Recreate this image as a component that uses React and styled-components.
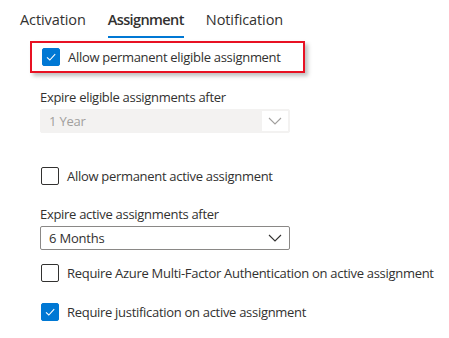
import React from "react";
import styled, { createGlobalStyle } from "styled-components";

const Global = createGlobalStyle`
  html, body { margin: 0; padding: 0; background: #fff; }
  body { font-family: "Open Sans", "Noto Sans", sans-serif; color: #323130; }
`;

const Page = styled.div`
  width: 449px;
  height: 338px;
  overflow: hidden;
  display: flex;
  flex-direction: column;
`;

const Tabs = styled.div`
  display: flex;
  padding-left: 20px;
  height: 38px;
  gap: 22px;
`;

const Tab = styled.div`
  font-size: 14.5px;
  font-weight: ${(p) => (p.$active ? 600 : 400)};
  letter-spacing: ${(p) => (p.$active ? "-0.6px" : "-0.1px")};
  color: #323130;
  display: flex;
  align-items: center;
  height: 38px;
  box-sizing: border-box;
  padding-top: 3px;
  border-bottom: 2px solid ${(p) => (p.$active ? "#0078d4" : "transparent")};
`;

const Highlight = styled.div`
  margin: 3px 0 0 30px;
  width: 275px;
  height: 32px;
  box-sizing: border-box;
  border: 2px solid #e81123;
  box-shadow: 3px 3px 4px rgba(0, 0, 0, 0.25);
  display: flex;
  align-items: center;
  padding-left: 9px;
`;

const Content = styled.div`
  padding-left: 40px;
  display: flex;
  flex-direction: column;
`;

const Row = styled.label`
  display: flex;
  align-items: center;
  gap: 8px;
  font-size: 13px;
  letter-spacing: -0.3px;
  white-space: nowrap;
  height: 20px;
  margin-top: ${(p) => p.$mt || 0}px;
  padding-left: 1px;
`;

const Box = styled.span`
  width: 18px;
  height: 18px;
  box-sizing: border-box;
  border-radius: 2px;
  border: 1px solid ${(p) => (p.$checked ? "#0078d4" : "#323130")};
  background: ${(p) => (p.$checked ? "#0078d4" : "#fff")};
  display: flex;
  align-items: center;
  justify-content: center;
  flex: none;
`;

const Label = styled.div`
  font-size: 13px;
  letter-spacing: -0.3px;
  line-height: 20px;
  margin-top: ${(p) => p.$mt || 0}px;
`;

const Select = styled.div`
  width: 250px;
  height: 24px;
  box-sizing: border-box;
  margin-top: 2px;
  border-radius: 2px;
  border: 1px solid ${(p) => (p.$disabled ? "#f3f2f1" : "#8a8886")};
  background: ${(p) => (p.$disabled ? "#f3f2f1" : "#fff")};
  color: ${(p) => (p.$disabled ? "#a19f9d" : "#323130")};
  display: flex;
  align-items: center;
  justify-content: space-between;
  font-size: 13px;
  letter-spacing: -0.2px;
  padding-left: 8px;
`;

const Caret = styled.span`
  width: 26px;
  height: 20px;
  margin-right: 1px;
  background: ${(p) => (p.$disabled ? "#fff" : "transparent")};
  display: flex;
  align-items: center;
  justify-content: center;
`;

const Check = () => (
  <svg width="12" height="12" viewBox="0 0 12 12">
    <path d="M2 6.3 L4.8 9 L10.2 3.2" fill="none" stroke="#fff" strokeWidth="1.1" />
  </svg>
);

const Chevron = ({ color }) => (
  <svg width="14" height="8" viewBox="0 0 14 8">
    <path d="M1 1 L7 7 L13 1" fill="none" stroke={color} strokeWidth="1.1" />
  </svg>
);

const Checkbox = ({ checked, children, mt }) => (
  <Row $mt={mt}>
    <Box $checked={checked}>{checked && <Check />}</Box>
    {children}
  </Row>
);

export default function App() {
  return (
    <Page>
      <Global />
      <Tabs>
        <Tab>Activation</Tab>
        <Tab $active>Assignment</Tab>
        <Tab>Notification</Tab>
      </Tabs>
      <Highlight>
        <Row>
          <Box $checked>
            <Check />
          </Box>
          Allow permanent eligible assignment
        </Row>
      </Highlight>
      <Content>
        <Label $mt={14}>Expire eligible assignments after</Label>
        <Select $disabled>
          1 Year
          <Caret $disabled>
            <Chevron color="#a19f9d" />
          </Caret>
        </Select>
        <Checkbox mt={33}>Allow permanent active assignment</Checkbox>
        <Label $mt={18}>Expire active assignments after</Label>
        <Select>
          6 Months
          <Caret>
            <Chevron color="#323130" />
          </Caret>
        </Select>
        <Checkbox mt={13}>Require Azure Multi-Factor Authentication on active assignment</Checkbox>
        <Checkbox checked mt={19}>Require justification on active assignment</Checkbox>
      </Content>
    </Page>
  );
}
